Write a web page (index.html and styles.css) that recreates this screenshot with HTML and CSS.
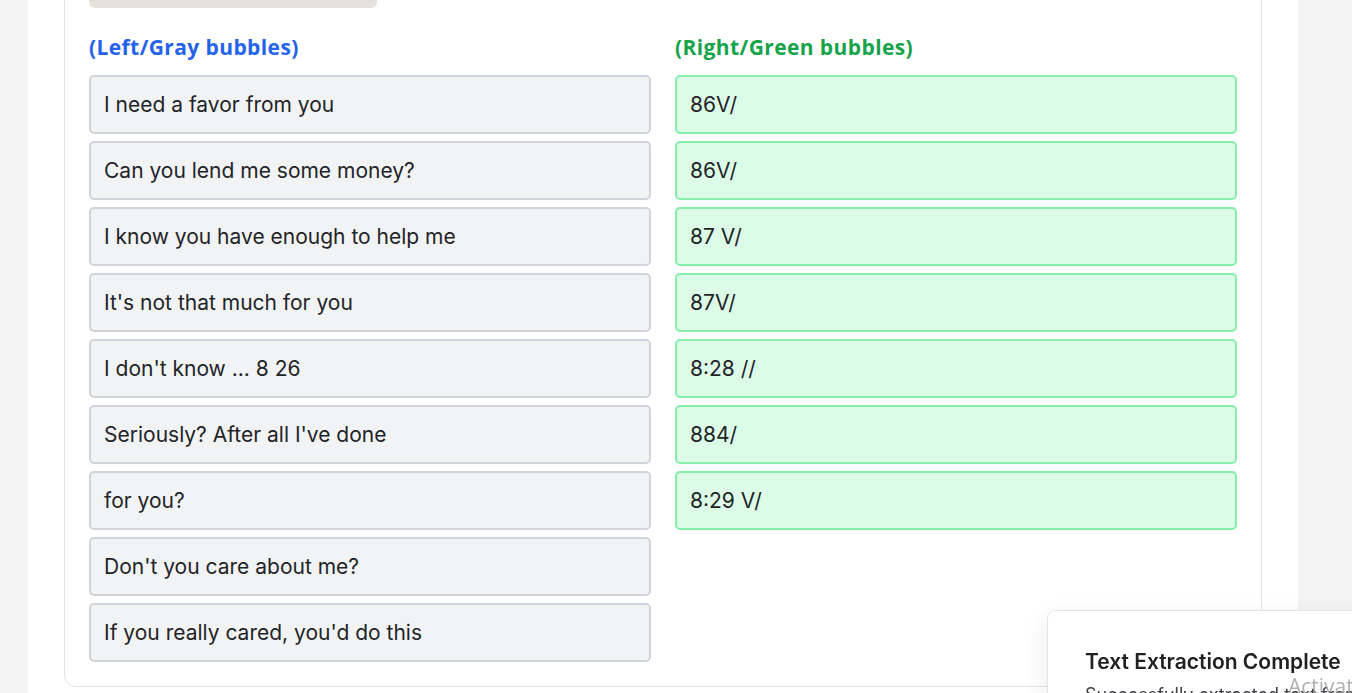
FILE: index.html
```html
<!DOCTYPE html>
<html lang="en">
<head>
<meta charset="utf-8">
<title>Bubbles</title>
<link rel="stylesheet" href="styles.css">
</head>
<body>
<main class="page">
  <section class="card">
    <div class="image-bar"></div>
    <div class="columns">
      <div class="column">
        <h3 class="col-title col-title--left">(Left/Gray bubbles)</h3>
        <div class="bubble-list">
          <div class="bubble bubble--gray">I need a favor from you</div>
          <div class="bubble bubble--gray">Can you lend me some money?</div>
          <div class="bubble bubble--gray">I know you have enough to help me</div>
          <div class="bubble bubble--gray">It's not that much for you</div>
          <div class="bubble bubble--gray">I don't know ... 8 26</div>
          <div class="bubble bubble--gray">Seriously? After all I've done</div>
          <div class="bubble bubble--gray">for you?</div>
          <div class="bubble bubble--gray">Don't you care about me?</div>
          <div class="bubble bubble--gray">If you really cared, you'd do this</div>
        </div>
      </div>
      <div class="column">
        <h3 class="col-title col-title--right">(Right/Green bubbles)</h3>
        <div class="bubble-list">
          <div class="bubble bubble--green">86V/</div>
          <div class="bubble bubble--green">86V/</div>
          <div class="bubble bubble--green">87 V/</div>
          <div class="bubble bubble--green">87V/</div>
          <div class="bubble bubble--green">8:28 //</div>
          <div class="bubble bubble--green">884/</div>
          <div class="bubble bubble--green">8:29 V/</div>
        </div>
      </div>
    </div>
  </section>
</main>

<div class="toast">
  <div class="toast-title">Text Extraction Complete</div>
  <div class="toast-text">Successfully extracted text from image.</div>
</div>

<div class="watermark">Activate Windows</div>
</body>
</html>
```

FILE: styles.css
```css
* { box-sizing: border-box; }

html, body {
  margin: 0;
  padding: 0;
  height: 100%;
  overflow: hidden;
}

body {
  background: #f4f4f5;
  font-family: Inter, "Liberation Sans", sans-serif;
  color: #1f2328;
}

.page {
  display: flow-root;
  margin-left: 28px;
  width: 1270px;
  min-height: 100%;
  background: #ffffff;
  padding: 0 36px 40px;
}

.card {
  margin-top: -60px;
  border: 1px solid #e4e4e7;
  border-radius: 12px;
  padding: 24px;
}

.image-bar {
  width: 288px;
  height: 43px;
  background: #e4e2da;
  border-radius: 6px;
}

.columns {
  margin-top: 25px;
  display: grid;
  grid-template-columns: 1fr 1fr;
  column-gap: 24px;
}

.col-title {
  margin: 0 0 14px 0;
  height: 28px;
  line-height: 28px;
  font-family: "Open Sans", Lato, sans-serif;
  font-weight: 700;
  font-size: 21px;
  letter-spacing: 0.4px;
}

.col-title--left { color: #2563eb; }
.col-title--right { color: #16a34a; }

.bubble-list {
  display: flex;
  flex-direction: column;
  gap: 7px;
}

.bubble {
  height: 59px;
  display: flex;
  align-items: center;
  padding: 0 13px;
  border: 2px solid;
  border-radius: 5px;
  font-size: 21px;
  color: #222428;
}

.bubble--gray {
  background: #f2f3f5;
  border-color: #d2d4db;
}

.bubble--green {
  background: #dcfce8;
  border-color: #86efac;
}

.toast {
  position: fixed;
  left: 1047px;
  top: 610px;
  width: 380px;
  height: 140px;
  background: #ffffff;
  border: 1px solid #e4e4e7;
  border-radius: 8px;
  box-shadow: 0 8px 28px rgba(0, 0, 0, 0.08);
  padding: 38px 24px 0 37px;
}

.toast-title {
  font-family: Inter, sans-serif;
  font-weight: 600;
  font-size: 21px;
  line-height: 26px;
  color: #212121;
}

.toast-text {
  margin-top: 8px;
  font-size: 18px;
  line-height: 24px;
  color: #3f3f46;
}

.watermark {
  position: fixed;
  left: 1288px;
  top: 672px;
  font-family: "Open Sans", sans-serif;
  font-size: 21px;
  color: rgba(150, 150, 150, 0.75);
  white-space: nowrap;
}
```
